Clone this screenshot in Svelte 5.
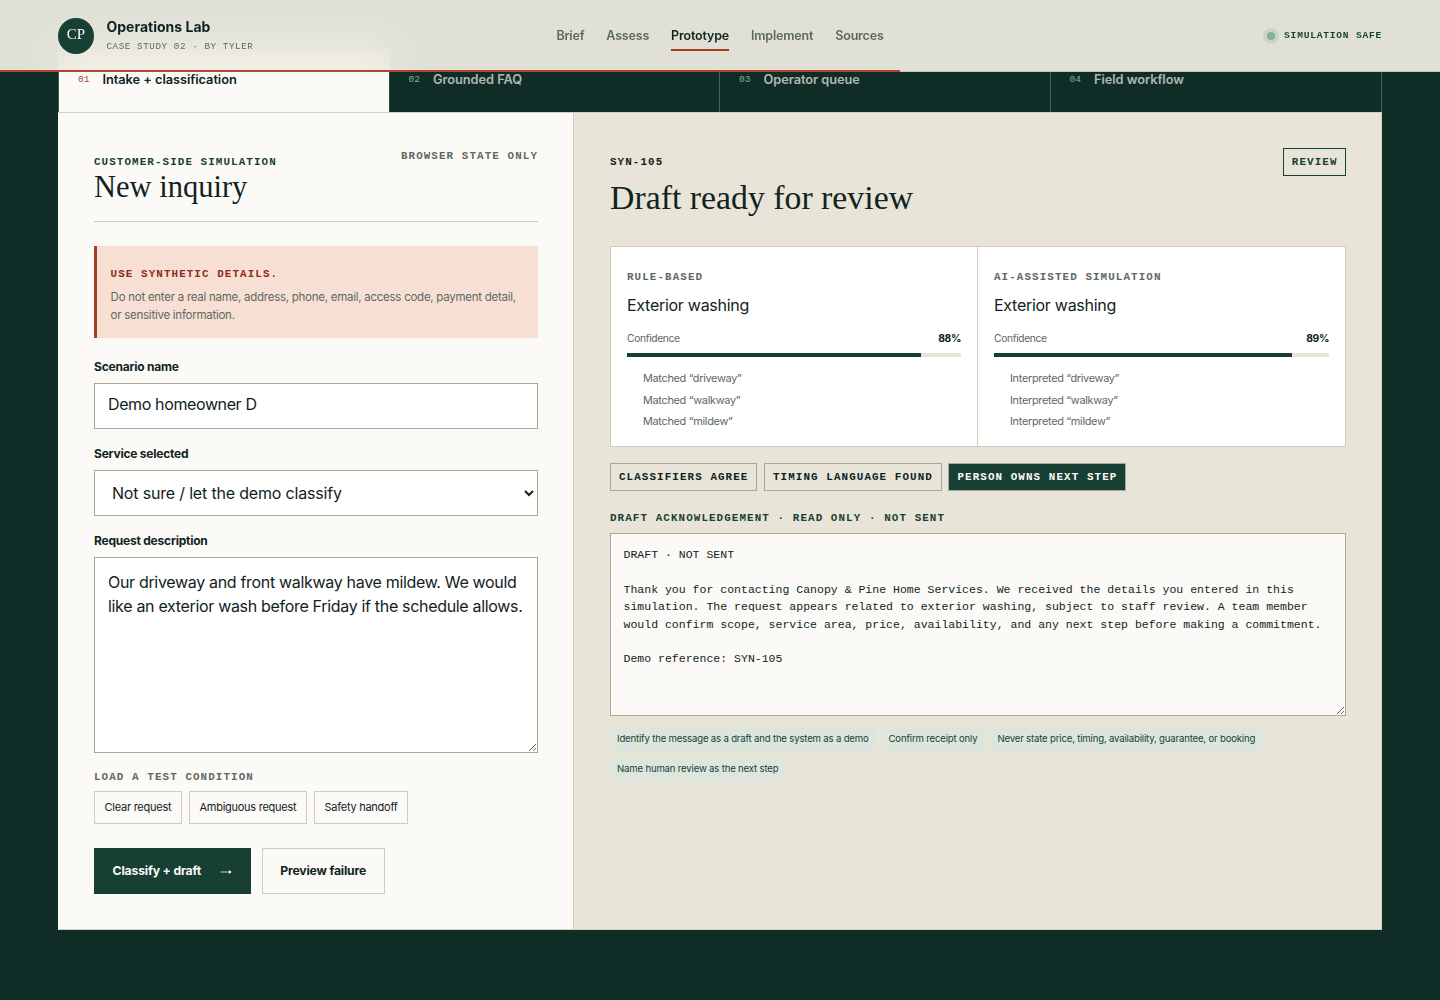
<script>
    const links = ['Brief', 'Assess', 'Prototype', 'Implement', 'Sources'];
    const tabs = ['Intake + classification', 'Grounded FAQ', 'Operator queue', 'Field workflow'];
    const services = ['Not sure / let the demo classify', 'Exterior washing', 'Window cleaning', 'Gutter cleaning'];
    const conditions = ['Clear request', 'Ambiguous request', 'Safety handoff'];

    const results = [
        { method: 'Rule-based', service: 'Exterior washing', confidence: 88, verb: 'Matched' },
        { method: 'AI-assisted simulation', service: 'Exterior washing', confidence: 89, verb: 'Interpreted' },
    ];
    const signals = ['driveway', 'walkway', 'mildew'];

    const rules = [
        'Identify the message as a draft and the system as a demo',
        'Confirm receipt only',
        'Never state price, timing, availability, guarantee, or booking',
        'Name human review as the next step',
    ];

    const draft = `DRAFT · NOT SENT

Thank you for contacting Canopy & Pine Home Services. We received the details you entered in this simulation. The request appears related to exterior washing, subject to staff review. A team member would confirm scope, service area, price, availability, and any next step before making a commitment.

Demo reference: SYN-105`;

    let activeLink = $state('Prototype');
    let activeTab = $state(0);
    let scenario = $state('Demo homeowner D');
    let service = $state(services[0]);
    let request = $state('Our driveway and front walkway have mildew. We would like an exterior wash before Friday if the schedule allows.');
</script>

<header class="site-header">
    <div class="brand">
        <span class="brand-mark">CP</span>
        <div class="brand-text">
            <strong>Operations Lab</strong>
            <small>Case study 02 · By Tyler</small>
        </div>
    </div>
    <nav class="site-nav">
        {#each links as link}
            <button class:active={activeLink === link} onclick={() => (activeLink = link)}>{link}</button>
        {/each}
    </nav>
    <div class="safe"><i></i><span>Simulation safe</span></div>
    <div class="progress"></div>
</header>

<main class="lab">
    <div class="tabs">
        {#each tabs as tab, i}
            <button class="tab" class:active={activeTab === i} onclick={() => (activeTab = i)}>
                <span class="tab-number">0{i + 1}</span>
                <span class="tab-name">{tab}</span>
            </button>
        {/each}
    </div>

    <div class="workspace">
        <section class="intake">
            <div class="intake-head">
                <div>
                    <p class="eyebrow green">Customer-side simulation</p>
                    <h2>New inquiry</h2>
                </div>
                <span class="eyebrow muted">Browser state only</span>
            </div>

            <div class="notice">
                <strong class="eyebrow">Use synthetic details.</strong>
                <p>Do not enter a real name, address, phone, email, access code, payment detail, or sensitive information.</p>
            </div>

            <div class="field">
                <label for="scenario">Scenario name</label>
                <input id="scenario" type="text" bind:value={scenario} />
            </div>
            <div class="field">
                <label for="service">Service selected</label>
                <select id="service" bind:value={service}>
                    {#each services as option}
                        <option value={option}>{option}</option>
                    {/each}
                </select>
            </div>
            <div class="field">
                <label for="request">Request description</label>
                <textarea id="request" bind:value={request} spellcheck="false"></textarea>
            </div>

            <p class="eyebrow muted load-label">Load a test condition</p>
            <div class="conditions">
                {#each conditions as condition}
                    <button>{condition}</button>
                {/each}
            </div>
            <div class="actions">
                <button class="primary">
                    <span>Classify + draft</span>
                    <svg width="12" height="8" viewBox="0 0 12 8" fill="none" stroke="currentColor" stroke-width="0.8">
                        <path d="M0.5 5H11" />
                        <path d="M9 3L11.5 5L9 7Z" fill="currentColor" stroke="none" />
                    </svg>
                </button>
                <button class="secondary">Preview failure</button>
            </div>
        </section>

        <section class="review">
            <div class="review-head">
                <div>
                    <p class="eyebrow">SYN-105</p>
                    <h2>Draft ready for review</h2>
                </div>
                <span class="eyebrow badge">Review</span>
            </div>

            <div class="results">
                {#each results as result}
                    <article>
                        <p class="eyebrow muted">{result.method}</p>
                        <h3>{result.service}</h3>
                        <div class="confidence">
                            <span>Confidence</span>
                            <strong>{result.confidence}%</strong>
                        </div>
                        <div class="meter"><div style="width: {result.confidence}%"></div></div>
                        <ul>
                            {#each signals as signal}
                                <li>{result.verb} “{signal}”</li>
                            {/each}
                        </ul>
                    </article>
                {/each}
            </div>

            <div class="tags">
                <span class="eyebrow">Classifiers agree</span>
                <span class="eyebrow">Timing language found</span>
                <span class="eyebrow filled">Person owns next step</span>
            </div>

            <label class="eyebrow green draft-label" for="draft">Draft acknowledgement · Read only · Not sent</label>
            <textarea id="draft" class="draft" readonly value={draft}></textarea>

            <div class="rules">
                {#each rules as rule}
                    <span>{rule}</span>
                {/each}
            </div>
        </section>
    </div>
</main>

<style>
    :global(body) {
        background: #0f2d26;
        color: #10231e;
        font-family: Inter, "Liberation Sans", sans-serif;
        font-size: 16px;
    }
    * {
        box-sizing: border-box;
    }
    p, h2, h3, ul {
        margin: 0;
        padding: 0;
    }
    button, input, select, textarea {
        font: inherit;
        color: inherit;
        border-radius: 0;
    }
    button {
        padding: 0;
        border: 0;
        background: none;
        cursor: pointer;
    }
    h2 {
        font-family: "Liberation Serif", serif;
        font-weight: 400;
    }

    .eyebrow {
        font-family: "Liberation Mono", monospace;
        font-size: 10.88px;
        font-weight: 700;
        line-height: 16px;
        letter-spacing: 1.09px;
        text-transform: uppercase;
        white-space: nowrap;
    }
    .green {
        color: #183f34;
    }
    .muted {
        color: #5c6963;
    }

    .site-header {
        position: relative;
        z-index: 2;
        display: grid;
        grid-template-columns: 1fr auto 1fr;
        align-items: center;
        height: 72px;
        padding: 0 58px;
        border-bottom: 1px solid #c9c6b6;
        background: rgba(243, 240, 230, 0.92);
        backdrop-filter: blur(18px);
    }
    .brand {
        display: flex;
        align-items: center;
        gap: 12.5px;
        padding-top: 1px;
    }
    .brand-mark {
        display: grid;
        place-items: center;
        width: 36px;
        height: 36px;
        padding-bottom: 3px;
        border-radius: 50%;
        background: #183f34;
        color: #fcfaf5;
        font-family: "Liberation Serif", serif;
        font-size: 15px;
    }
    .brand-text {
        display: flex;
        flex-direction: column;
        gap: 5px;
        padding-bottom: 2px;
    }
    .brand-text strong {
        font-size: 14px;
        line-height: 18px;
    }
    .brand-text small {
        color: #5c6963;
        font-family: "Liberation Mono", monospace;
        font-size: 9.28px;
        line-height: 12px;
        letter-spacing: 0.56px;
        text-transform: uppercase;
    }
    .site-nav {
        display: flex;
        gap: 22px;
    }
    .site-nav button {
        height: 31px;
        padding-top: 1px;
        border-bottom: 2px solid transparent;
        color: #5c6963;
        font-size: 12.5px;
        font-weight: 600;
        letter-spacing: -0.18px;
    }
    .site-nav button.active {
        border-color: #a93c24;
        color: #10231e;
    }
    .safe {
        display: flex;
        align-items: center;
        justify-content: flex-end;
        gap: 9px;
        color: #183f34;
        font-family: "Liberation Mono", monospace;
        font-size: 9.6px;
        font-weight: 700;
        letter-spacing: 0.77px;
        text-transform: uppercase;
    }
    .safe i {
        width: 8px;
        height: 8px;
        border-radius: 50%;
        background: #86af99;
        box-shadow: 0 0 0 4px rgba(134, 175, 153, 0.25);
    }
    .progress {
        position: absolute;
        left: 0;
        bottom: -1px;
        width: 62.5%;
        height: 2px;
        background: #b3452c;
    }

    .lab {
        width: 1324px;
        margin: -24px auto 0;
    }
    .tabs {
        display: grid;
        grid-template-columns: repeat(4, 1fr);
        height: 64px;
        border: 1px solid #45605a;
        border-bottom: 0;
    }
    .tab {
        display: flex;
        align-items: center;
        gap: 13px;
        padding: 0 19px;
        border-right: 1px solid #45605a;
        color: #aeb9b2;
    }
    .tab:last-child {
        border-right: 0;
    }
    .tab.active {
        border-color: #2b473f;
        background: #fcfaf6;
        color: #10231e;
    }
    .tab-number {
        padding-bottom: 2px;
        color: #86af99;
        font-family: "Liberation Mono", monospace;
        font-size: 9.6px;
    }
    .tab.active .tab-number {
        color: #b3452c;
    }
    .tab-name {
        padding-bottom: 2px;
        font-size: 12.8px;
        font-weight: 600;
        letter-spacing: -0.05px;
    }

    .workspace {
        display: grid;
        grid-template-columns: 515px 1fr;
        height: 818px;
        border: 1px solid #d2cfbf;
        border-left-color: #fcfaf6;
    }
    .intake {
        padding: 35px;
        border-right: 1px solid #cfccbd;
        background: #fcfaf6;
    }
    .intake-head {
        display: flex;
        justify-content: space-between;
        height: 74px;
        border-bottom: 1px solid #cfccbd;
    }
    .intake-head .green {
        margin-top: 6px;
    }
    .intake-head h2 {
        font-size: 30.5px;
        line-height: 34px;
    }
    .notice {
        height: 92px;
        margin: 24px 0 21px;
        padding: 20px 14px 0 13.6px;
        border-left: 3px solid #a93c24;
        background: #f8dfd3;
    }
    .notice .eyebrow {
        display: block;
        margin-bottom: 6px;
        color: #8c2c1b;
    }
    .notice p {
        color: #5c6963;
        font-size: 11.5px;
        line-height: 18px;
        letter-spacing: -0.26px;
    }

    .field {
        display: flex;
        flex-direction: column;
        gap: 8px;
        margin-bottom: 17px;
    }
    .field label {
        font-size: 12px;
        font-weight: 700;
        line-height: 16px;
        letter-spacing: -0.22px;
    }
    .field input, .field select, .field textarea {
        width: 100%;
        height: 46px;
        padding: 10px 13px;
        border: 1px solid #aaa797;
        outline: none;
        background: #fff;
        letter-spacing: -0.32px;
    }
    .field input {
        padding-top: 9px;
        padding-bottom: 13px;
        letter-spacing: -0.38px;
    }
    .field select {
        letter-spacing: -0.18px;
    }
    .field textarea {
        display: block;
        height: 196px;
        line-height: 24px;
        padding-top: 12px;
    }
    .load-label {
        margin-top: -1px;
    }
    .conditions {
        display: flex;
        gap: 7px;
        margin-top: 6px;
    }
    .conditions button {
        height: 33px;
        padding: 0 9.6px 1px;
        border: 1px solid #cfccbd;
        font-size: 11px;
        letter-spacing: -0.26px;
    }
    .actions {
        display: flex;
        gap: 11px;
        margin-top: 24px;
    }
    .actions button {
        display: flex;
        align-items: center;
        height: 46px;
        padding: 0 17.6px 1px;
        border: 1px solid #cfccbd;
        font-size: 12.2px;
        font-weight: 700;
        letter-spacing: -0.16px;
    }
    .actions .primary {
        gap: 19px;
        border-color: #183f34;
        background: #183f34;
        color: #fcfaf6;
    }

    .review {
        padding: 35px 35px 0 36px;
        background: #e8e4d8;
    }
    .review-head {
        display: flex;
        align-items: flex-start;
        justify-content: space-between;
        height: 98px;
    }
    .review-head p {
        margin-top: 6px;
    }
    .review-head h2 {
        margin-top: 7px;
        font-size: 33.8px;
        line-height: 41px;
    }
    .badge {
        padding: 5px 7.5px;
        border: 1px solid #183f34;
        color: #183f34;
    }
    .results {
        display: grid;
        grid-template-columns: 1fr 1fr;
        height: 201px;
        border: 1px solid #cfccbd;
        background: #fff;
    }
    article {
        padding: 22px 16px 0;
    }
    article:first-child {
        border-right: 1px solid #cfccbd;
    }
    h3 {
        margin: 9px 0 14px;
        font-size: 16px;
        font-weight: 400;
        line-height: 22px;
        letter-spacing: -0.28px;
    }
    .confidence {
        display: flex;
        justify-content: space-between;
        color: #5c6963;
        font-size: 10.3px;
        line-height: 16px;
        letter-spacing: -0.36px;
    }
    .confidence strong {
        color: #10231e;
    }
    .meter {
        height: 4px;
        margin: 7px 0 11px;
        background: #e8e4d8;
    }
    .meter div {
        height: 100%;
        background: #183f34;
    }
    ul {
        padding-left: 16px;
        list-style: none;
    }
    li {
        color: #5c6963;
        font-size: 10.9px;
        line-height: 21.5px;
        letter-spacing: -0.3px;
    }
    .tags {
        display: flex;
        gap: 6.5px;
        margin-top: 16px;
    }
    .tags span {
        padding: 5px 8px;
        border: 1px solid #aaa797;
    }
    .tags .filled {
        background: #183f34;
        color: #fcfaf6;
    }
    .draft-label {
        display: block;
        margin: 19px 0 7px;
    }
    .draft {
        display: block;
        width: 100%;
        height: 183px;
        padding: 12px 12.5px;
        border: 1px solid #aaa797;
        outline: none;
        background: #fcfaf6;
        font-family: "Liberation Mono", monospace;
        font-size: 11.52px;
        line-height: 17.4px;
    }
    .rules {
        display: flex;
        flex-wrap: wrap;
        gap: 6px;
        margin-top: 11px;
    }
    .rules span {
        padding: 0 7px;
        background: #dce6dd;
        color: #183f34;
        font-size: 9.6px;
        line-height: 24px;
        letter-spacing: -0.18px;
    }
</style>
